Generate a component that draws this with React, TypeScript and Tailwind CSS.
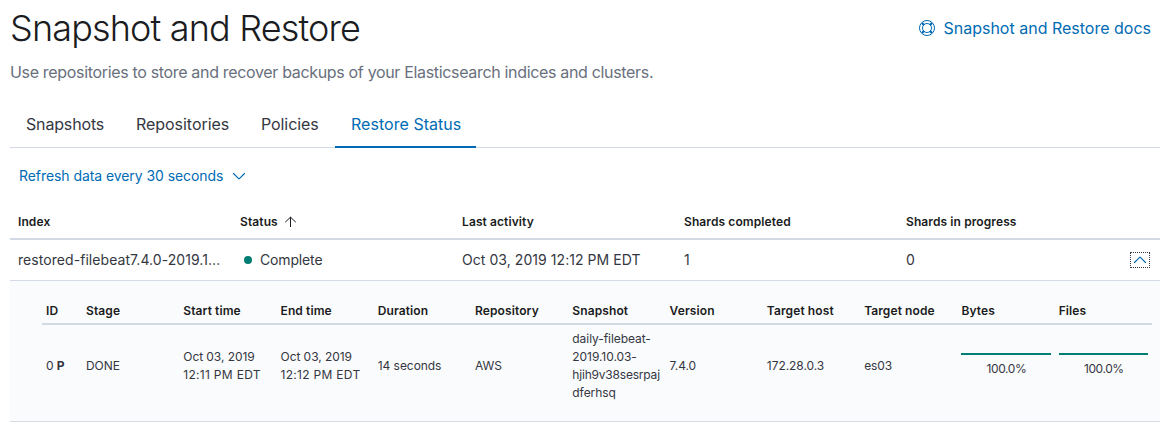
import React from "react";

const columns = ["Index", "Status", "Last activity", "Shards completed", "Shards in progress"];

const shardColumns = [
  "Stage",
  "Start time",
  "End time",
  "Duration",
  "Repository",
  "Snapshot",
  "Version",
  "Target host",
  "Target node",
  "Bytes",
  "Files",
];

const tabs = [
  { name: "Snapshots", size: "w-[110px] tracking-[-0.16px]" },
  { name: "Repositories", size: "w-[125px] tracking-[-0.04px]" },
  { name: "Policies", size: "w-[90px] tracking-[-0.08px]" },
  { name: "Restore Status", size: "w-[141px] tracking-[0.04px]" },
];

function HelpIcon() {
  return (
    <svg width="16" height="16" viewBox="0 0 16 16" fill="none" stroke="currentColor" aria-hidden="true">
      <circle cx="8" cy="8" r="7.5" />
      <circle cx="8" cy="8" r="4.5" />
      <path strokeWidth="2.2" d="M3 3l1.9 1.9M13 3l-1.9 1.9M3 13l1.9-1.9M13 13l-1.9-1.9" />
    </svg>
  );
}

function ChevronIcon({ up = false }: { up?: boolean }) {
  return (
    <svg width="16" height="16" viewBox="0 0 16 16" fill="none" stroke="currentColor" strokeWidth="1.15" strokeLinecap="round" aria-hidden="true">
      <path d={up ? "M2.5 10.5 7.65 5.35a.5.5 0 0 1 .7 0L13.5 10.5" : "M2.5 5.5 7.65 10.65a.5.5 0 0 0 .7 0L13.5 5.5"} />
    </svg>
  );
}

function SortUpIcon() {
  return (
    <svg width="12" height="12" viewBox="0 0 12 12" fill="none" stroke="currentColor" aria-hidden="true">
      <path d="M6.5 1v10M1.2 6.2l5.3-5 5.3 5" />
    </svg>
  );
}

function Progress({ value }: { value: number }) {
  return (
    <div className="pb-px">
      <div className="h-0.5 bg-[#d3dae6]">
        <div className="h-full bg-[#017d73]" style={{ width: `${value}%` }} />
      </div>
      <div className="pt-[5px] pl-px text-center tracking-[-0.4px]">{value.toFixed(1)}%</div>
    </div>
  );
}

function Timestamp({ date, time }: { date: string; time: string }) {
  return (
    <>
      <span className="block">{date}</span>
      <span className="block tracking-[0.3px]">{time}</span>
    </>
  );
}

function ShardTable() {
  return (
    <table className="w-[1110px] table-fixed border-collapse text-left text-xs leading-[18px] tracking-[-0.06px]">
      <colgroup>
        <col className="w-10" />
        {shardColumns.map((name) => (
          <col key={name} />
        ))}
      </colgroup>
      <thead>
        <tr className="h-[25px] border-b-2 border-[#d3dae6] text-[#1a1c21]">
          {["ID", ...shardColumns].map((name) => (
            <th key={name} className="p-0 pt-px pl-1 font-semibold tracking-[0.1px] whitespace-nowrap">
              {name}
            </th>
          ))}
        </tr>
      </thead>
      <tbody>
        <tr className="h-[84px] align-middle">
          <td className="pl-1 whitespace-nowrap">
            0 <strong className="font-bold">P</strong>
          </td>
          <td className="pl-1">DONE</td>
          <td className="pl-1 whitespace-nowrap">
            <Timestamp date="Oct 03, 2019" time="12:11 PM EDT" />
          </td>
          <td className="pl-1 whitespace-nowrap">
            <Timestamp date="Oct 03, 2019" time="12:12 PM EDT" />
          </td>
          <td className="pl-1 whitespace-nowrap">14 seconds</td>
          <td className="pl-1">AWS</td>
          <td className="pl-1 whitespace-nowrap">
            daily-filebeat-
            <br />
            2019.10.03-
            <br />
            <span className="tracking-[-0.2px]">hjih9v38sesrpaj</span>
            <br />
            dferhsq
          </td>
          <td className="pl-1">7.4.0</td>
          <td className="pl-1">172.28.0.3</td>
          <td className="pl-1">es03</td>
          <td className="px-1">
            <Progress value={100} />
          </td>
          <td className="px-1">
            <Progress value={100} />
          </td>
        </tr>
      </tbody>
    </table>
  );
}

export default function App() {
  return (
    <main className="h-[438px] overflow-hidden bg-white pr-3 pl-2.5 font-['Inter',sans-serif] text-[#343741]">
      <header className="flex h-14 items-center justify-between pr-[9px]">
        <h1 className="text-4xl leading-[56px] font-light tracking-[-0.84px] text-[#1a1c21]">Snapshot and Restore</h1>
        <a className="flex items-center gap-2 text-base leading-6 text-[#006bb4]">
          <HelpIcon />
          Snapshot and Restore docs
        </a>
      </header>
      <p className="mt-1 text-base leading-6 tracking-[-0.33px] text-[#69707d]">
        Use repositories to store and recover backups of your Elasticsearch indices and clusters.
      </p>

      <nav className="mt-4 flex h-12 border-b border-[#d3dae6]">
        {tabs.map(({ name, size }) => (
          <button
            key={name}
            className={`h-12 border-b-2 pt-0.5 pl-4 text-left text-base leading-6 whitespace-nowrap ${size} ${
              name === "Restore Status" ? "border-[#006bb4] text-[#006bb4]" : "border-transparent"
            }`}
          >
            {name}
          </button>
        ))}
      </nav>

      <button className="mt-4 ml-[9px] flex h-6 items-center gap-2 text-sm tracking-[-0.07px] text-[#006bb4]">
        Refresh data every 30 seconds
        <ChevronIcon />
      </button>

      <table className="mt-4 w-[1150px] table-fixed border-collapse text-left text-sm tracking-[0.06px]">
        <colgroup>
          {columns.map((name) => (
            <col key={name} className="w-[222px]" />
          ))}
          <col className="w-10" />
        </colgroup>
        <thead>
          <tr className="h-[35px] border-b-2 border-[#d3dae6] text-xs tracking-[0.1px] text-[#1a1c21]">
            {columns.map((name) => (
              <th key={name} className="p-0 pt-px pl-2 font-semibold">
                <span className="flex items-center gap-1.5">
                  {name}
                  {name === "Status" && <SortUpIcon />}
                </span>
              </th>
            ))}
            <th />
          </tr>
        </thead>
        <tbody>
          <tr className="h-[41px] border-b border-[#d3dae6]">
            <td className="pl-2 whitespace-nowrap">restored-filebeat7.4.0-2019.1…</td>
            <td className="pl-2">
              <span className="flex items-center gap-2 pl-1 tracking-[-0.15px]">
                <span className="size-2 rounded-full bg-[#017d73]" />
                Complete
              </span>
            </td>
            <td className="pl-2">Oct 03, 2019 12:12 PM EDT</td>
            <td className="pl-2">1</td>
            <td className="pl-2">0</td>
            <td className="pl-2.5">
              <button className="flex h-4 w-5 items-center justify-center border border-dotted border-[#343741] text-[#006bb4]">
                <ChevronIcon up />
              </button>
            </td>
          </tr>
          <tr className="h-[141px] border-b border-[#d3dae6] bg-[#fafbfd]">
            <td colSpan={6} className="pt-[18px] pl-8 align-top">
              <ShardTable />
            </td>
          </tr>
        </tbody>
      </table>
    </main>
  );
}
